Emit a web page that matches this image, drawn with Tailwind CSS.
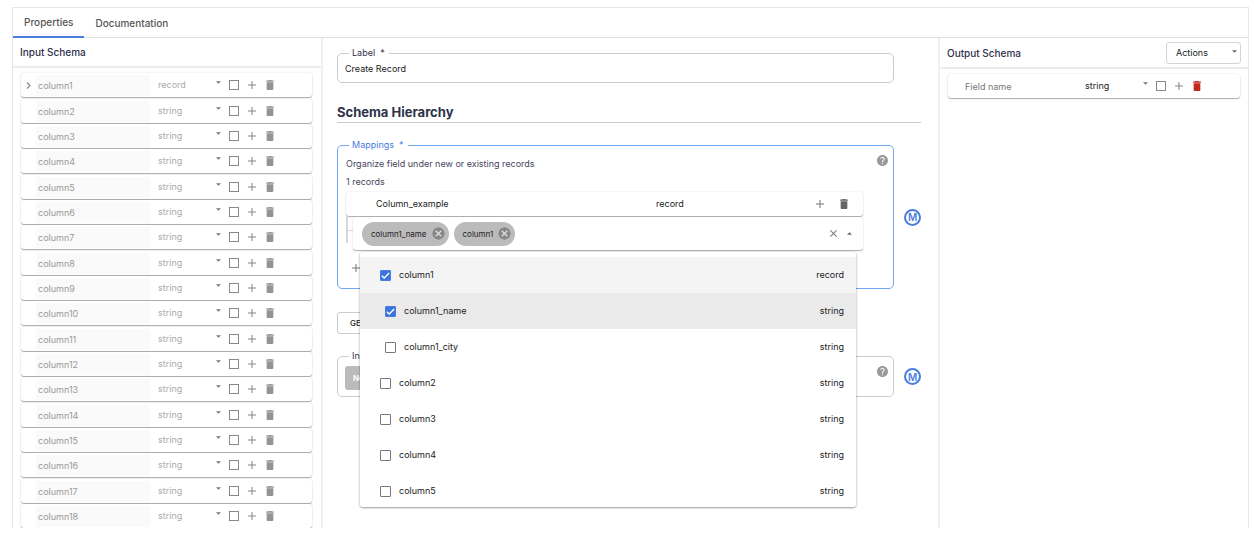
<!DOCTYPE html>
<html lang="en">
<head>
<meta charset="utf-8">
<meta name="viewport" content="width=device-width, initial-scale=1">
<title>Create Record</title>
<script src="https://cdn.jsdelivr.net/npm/@tailwindcss/browser@4"></script>
</head>
<body class="flex h-screen flex-col bg-white pt-[7px] pr-[5px] pb-4 pl-3 font-['Inter',sans-serif] text-[9px] leading-4 text-[#222]">

<svg class="hidden" aria-hidden="true">
  <symbol id="trash" viewBox="5 3 14 18"><path fill="currentColor" d="M6 19c0 1.100.9 2 2 2h8c1.100 0 2-.9 2-2V7H6zM19 4h-3.500l-1-1h-5l-1 1H5v2h14z"/></symbol>
  <symbol id="plus" viewBox="5 5 14 14"><path fill="currentColor" d="M19 12.900h-6.100V19h-1.800v-6.100H5v-1.800h6.100V5h1.800v6.100H19z"/></symbol>
  <symbol id="down" viewBox="0 0 10 5"><path fill="currentColor" d="M0 0h10L5 5z"/></symbol>
  <symbol id="close" viewBox="5 5 14 14"><path fill="currentColor" d="M19 6.400 17.600 5 12 10.600 6.400 5 5 6.400 10.600 12 5 17.600 6.400 19 12 13.400 17.600 19 19 17.600 13.400 12z"/></symbol>
  <symbol id="cancel" viewBox="2 2 20 20"><path fill="currentColor" d="M12 2a10 10 0 1 0 0 20 10 10 0 0 0 0-20m5 13.600L15.600 17 12 13.400 8.400 17 7 15.600l3.600-3.600L7 8.400 8.400 7l3.600 3.600L15.600 7 17 8.400 13.400 12z"/></symbol>
  <symbol id="help" viewBox="2 2 20 20"><path fill="currentColor" d="M12 2C6.480 2 2 6.480 2 12s4.480 10 10 10 10-4.480 10-10S17.520 2 12 2m1 17h-2v-2h2zm2.070-7.750-.9.920C13.450 12.900 13 13.500 13 15h-2v-.5c0-1.100.45-2.100 1.170-2.830l1.240-1.260c.37-.36.59-.86.59-1.410 0-1.100-.9-2-2-2s-2 .9-2 2H8c0-2.210 1.790-4 4-4s4 1.790 4 4c0 .88-.36 1.680-.93 2.250"/></symbol>
  <symbol id="check" viewBox="0 0 12 12"><path fill="none" stroke="#fff" stroke-width="1.500" d="m2 6.200 2.600 2.600L10 3.300"/></symbol>
</svg>

<div class="flex min-h-0 flex-1 flex-col border border-b-0 border-[#e6e6e8]">
  <div role="tablist" class="flex h-[30px] shrink-0 border-b border-[#dcdce4] text-[10px] font-medium text-[#555]">
    <button role="tab" aria-selected="true" class="-mb-px border-b-2 border-[#4a7de0] px-[11px]">Properties</button>
    <button role="tab" aria-selected="false" class="px-[11px]">Documentation</button>
  </div>

  <div class="grid min-h-0 flex-1 grid-cols-[310px_1fr_310px]">
    <aside class="flex min-h-0 flex-col border-r-2 border-[#f0f0f0]">
      <h2 class="h-[30px] shrink-0 border-b-2 border-[#ececec] px-[7px] text-[10px] leading-[29px] font-medium text-[#30304c]">Input Schema</h2>
      <ul id="inputs" class="min-h-0 flex-1 overflow-y-auto pt-[5px] pr-[9px] pl-2 [scrollbar-width:none]"></ul>
    </aside>

    <main class="min-w-0 pt-[9px] pr-[17px] pl-[14px]">
      <fieldset class="mr-[27px] rounded-[5px] border border-[#ccc] px-[7px]">
        <legend class="ml-[4px] pr-1 pl-[3px] leading-3 text-[#30304c]"><label for="label">Label&nbsp; *</label></legend>
        <input id="label" type="text" value="Create Record" class="mb-[5px] block h-[18px] w-full outline-none">
      </fieldset>

      <h1 class="mt-[19px] border-b border-[#ccc] text-[13px] leading-5 font-bold text-[#2d3348]">Schema Hierarchy</h1>

      <div class="mt-4 flex items-center gap-[10px]">
        <fieldset class="min-w-0 flex-1 rounded-[5px] border border-[#6ea6f5]">
          <legend class="ml-[11px] pr-1 pl-[3px] leading-3 text-[#4a7de0]">Mappings&nbsp; *</legend>
          <div class="flex h-[137px] items-start pl-2">
            <div class="min-w-0 flex-1 pt-[5px]">
              <p class="text-[#45455c]">Organize field under new or existing records</p>
              <p class="mt-[2px] text-[#45455c]">1 records</p>
              <div class="mt-[2px] flex h-6 items-center rounded-[3px] bg-white pr-[15px] pl-[30px] text-[#222] shadow-[0_1px_1px_rgba(0,0,0,0.3),0_0_2px_rgba(0,0,0,0.12)]">
                <input type="text" aria-label="Record name" value="Column_example" class="w-0 flex-1 outline-none">
                <span class="w-40">record</span>
                <button aria-label="Add field" class="mr-4 text-[#777]"><svg class="size-2"><use href="#plus"/></svg></button>
                <button aria-label="Delete record" class="text-[#666]"><svg class="h-[10px] w-2"><use href="#trash"/></svg></button>
              </div>
              <div class="mt-px flex">
                <div class="w-[7px] shrink-0">
                  <div class="h-[14px] border-b border-l-2 border-[#d8d8d8]"></div>
                  <div class="h-3 border-l-2 border-[#d8d8d8]"></div>
                </div>
                <div class="relative flex h-[33px] min-w-0 flex-1 items-center gap-[5px] rounded-[3px] bg-white pr-[11px] pl-[9px] shadow-[0_1px_1px_rgba(0,0,0,0.3),0_0_2px_rgba(0,0,0,0.12)]">
                  <span class="flex h-6 items-center gap-[5px] rounded-full bg-[#bbb] pr-1 pl-[9px] text-[8px]">column1_name<button aria-label="Remove column1_name" class="text-[#888]"><svg class="size-[13px] rounded-full bg-[#ddd]"><use href="#cancel"/></svg></button></span>
                  <span class="flex h-6 items-center gap-[5px] rounded-full bg-[#bbb] pr-1 pl-[9px] text-[8px]">column1<button aria-label="Remove column1" class="text-[#888]"><svg class="size-[13px] rounded-full bg-[#ddd]"><use href="#cancel"/></svg></button></span>
                  <input type="text" role="combobox" aria-label="Fields" aria-expanded="true" aria-controls="options" class="w-0 flex-1 outline-none">
                  <button aria-label="Clear" class="mr-[5px] text-[#777]"><svg class="size-[7px]"><use href="#close"/></svg></button>
                  <button aria-label="Close list" class="text-[#666]"><svg class="h-[3px] w-[5px] rotate-180"><use href="#down"/></svg></button>
                  <ul id="options" class="absolute top-[35px] right-[7px] left-[7px] z-10 h-[255px] overflow-y-auto rounded-[3px] bg-white pt-[5px] shadow-[0_1px_2px_rgba(0,0,0,0.35),0_0_3px_rgba(0,0,0,0.15)] [scrollbar-width:none]"></ul>
                </div>
              </div>
              <button aria-label="Add record" class="mt-[14px] ml-[6px] block text-[#777]"><svg class="size-2"><use href="#plus"/></svg></button>
            </div>
            <button aria-label="Help" class="mt-1 mr-[5px] ml-[14px] text-[#999]"><svg class="size-[11px]"><use href="#help"/></svg></button>
          </div>
        </fieldset>
        <button aria-label="Macro" class="mt-[6px] size-[17px] rounded-full border-2 border-[#4a7de0] text-[10px] leading-3 font-semibold text-[#4a7de0]">M</button>
      </div>

      <button class="mt-[23px] block h-[22px] rounded-[3px] border border-[#ccc] px-3 text-[8px] font-medium">GET SCHEMA</button>

      <div class="mt-4 flex items-center gap-[10px]">
        <fieldset class="min-w-0 flex-1 rounded-[5px] border border-[#ccc]">
          <legend class="ml-[11px] pr-1 pl-[3px] leading-3 text-[#30304c]">Input fields</legend>
          <div class="flex items-start pt-1 pb-[6px] pl-[7px]">
            <div class="flex-1"><button class="h-[24px] rounded-[3px] bg-[#bbb] px-2 text-[8px] font-bold text-white">None</button></div>
            <button aria-label="Help" class="mr-[5px] text-[#999]"><svg class="size-[11px]"><use href="#help"/></svg></button>
          </div>
        </fieldset>
        <button aria-label="Macro" class="mt-[6px] size-[17px] rounded-full border-2 border-[#4a7de0] text-[10px] leading-3 font-semibold text-[#4a7de0]">M</button>
      </div>
    </main>

    <aside class="border-l-2 border-[#f0f0f0]">
      <div class="flex h-[31px] items-center justify-between border-b-2 border-[#ececec] pr-[7px] pl-[7px]">
        <h2 class="text-[10px] font-medium text-[#30304c]">Output Schema</h2>
        <div class="relative">
          <select aria-label="Actions" class="h-[22px] w-[75px] appearance-none rounded-[3px] border border-[#d4d4d8] pl-[9px]"><option>Actions</option></select>
          <svg class="pointer-events-none absolute top-2 right-1 h-[3px] w-[5px] text-[#666]"><use href="#down"/></svg>
        </div>
      </div>
      <ul id="outputs" class="pt-[5px] pr-2 pl-2"></ul>
    </aside>
  </div>
</div>

<script>
const icon = (id, cls) => `<svg class="${cls}"><use href="#${id}"/></svg>`;

function fieldRow(f, i) {
  const out = f.output;
  const off = out ? '' : 'disabled';
  return `<li class="${out ? 'h-[26px] text-[#222]' : 'h-[25px] text-[#999] nth-[3n+1]:h-[26px]'}">
    <div class="flex h-6 items-center rounded-[3px] bg-white shadow-[0_1px_1px_rgba(0,0,0,0.3),0_0_2px_rgba(0,0,0,0.14)]">
      <span class="flex w-[15px] shrink-0 justify-center pr-px">${f.open ? '<button aria-label="Expand"><svg class="h-[7px] w-[5px]" viewBox="0 0 5 7"><path fill="none" stroke="#888" stroke-width="1.200" d="m1 .5 3 3-3 3"/></svg></button>' : ''}</span>
      <input type="text" aria-label="Field name ${i + 1}" value="${f.name}" placeholder="Field name" ${off} class="${out ? 'h-5 w-[114px] pl-[2px] outline-none placeholder:text-[#777]' : 'h-[21px] w-[114px] bg-[#fafafa] pl-[2px]'}">
      <div class="relative">
        <select aria-label="Type of field ${i + 1}" ${off} class="${out ? 'w-[71px] appearance-none pl-2 opacity-100' : 'w-[71px] appearance-none pl-2 text-[#aaa] opacity-100'}"><option>${f.type}</option></select>
        ${icon('down', 'pointer-events-none absolute top-1 right-0 h-[3px] w-[5px] text-[#777]')}
      </div>
      <input type="checkbox" aria-label="Nullable field ${i + 1}" ${off} class="ml-2 size-[10px] appearance-none border border-[#888]">
      <button aria-label="Add field" ${off} class="ml-[9px] text-[#888]">${icon('plus', 'size-2')}</button>
      <button aria-label="Delete field" ${off} class="${out ? 'ml-[10px] text-[#c0281c]' : 'ml-[10px] text-[#939393]'}">${icon('trash', 'h-[10px] w-2')}</button>
    </div>
  </li>`;
}

const inputs = Array.from({ length: 18 }, (_, i) => ({ name: `column${i + 1}`, type: i ? 'string' : 'record', open: i === 0 }));
document.getElementById('inputs').innerHTML = inputs.map(fieldRow).join('');
document.getElementById('outputs').innerHTML = fieldRow({ name: '', type: 'string', output: true }, 0);

const options = [
  ['column1', 'record', true, false, 'bg-[#f4f4f4]'],
  ['column1_name', 'string', true, true, 'bg-[#eaeaea]'],
  ['column1_city', 'string', false, true, ''],
  ['column2', 'string', false, false, ''],
  ['column3', 'string', false, false, ''],
  ['column4', 'string', false, false, ''],
  ['column5', 'string', false, false, ''],
];
document.getElementById('options').innerHTML = options.map(([name, type, on, nested, bg]) => `
  <li class="${bg}">
    <label class="${nested ? 'flex h-9 items-center pr-3 pl-[25px]' : 'flex h-9 items-center pr-3 pl-5'}">
      <span class="mr-2 grid">
        <input type="checkbox" ${on ? 'checked' : ''} class="col-start-1 row-start-1 size-[11px] appearance-none rounded-[1px] border border-[#777] checked:border-[#4a7de0] checked:bg-[#3b74dc]">
        ${on ? icon('check', 'pointer-events-none col-start-1 row-start-1 size-[11px]') : ''}
      </span>
      <span class="flex-1">${name}</span><span>${type}</span>
    </label>
  </li>`).join('');
</script>
</body>
</html>
